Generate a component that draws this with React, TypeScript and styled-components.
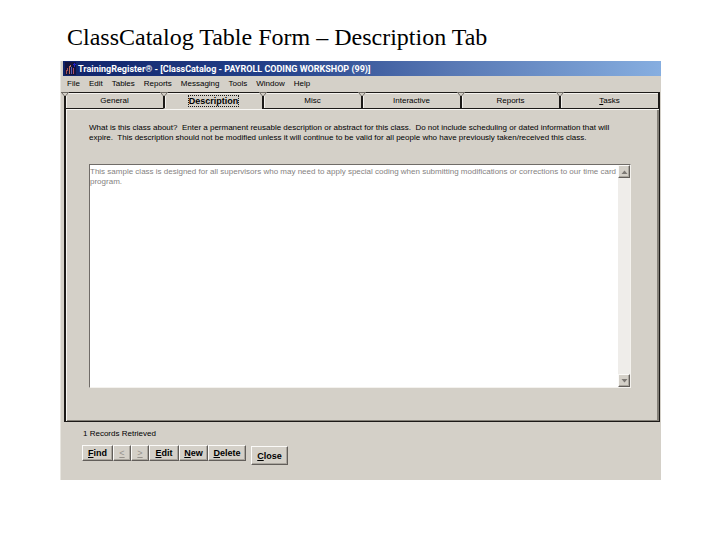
import React from "react";
import styled, { createGlobalStyle, css } from "styled-components";

const face = "#d4d0c8";
const ink = "#1c1a18";
const shade = "#848078";
const boldFont = `700 9px/10px "Liberation Sans", Arial, sans-serif`;

const GlobalStyle = createGlobalStyle`
  *, *::before, *::after { box-sizing: border-box; }
  body {
    margin: 0;
    background: #fff;
    color: #000;
    font-family: "Liberation Sans", Arial, sans-serif;
    font-size: 8px;
    line-height: 10px;
  }
  button, textarea { font: inherit; color: inherit; margin: 0; }
`;

const Page = styled.main`
  padding: 22px 59px 60px 60px;
`;

const Heading = styled.h1`
  margin: 0 0 9px 7px;
  font: 400 24px/30px "Liberation Serif", "Times New Roman", serif;
  color: #000;
`;

const AppWindow = styled.section`
  background: ${face};
  border-left: 1px solid #e8e6e0;
  padding-left: 2px;
  padding-bottom: 15px;
`;

const TitleBar = styled.header`
  display: flex;
  align-items: center;
  gap: 2px;
  height: 15px;
  padding-left: 2px;
  background: linear-gradient(90deg, #10246a 0%, #24418a 35%, #5878b4 65%, #86aee0 100%);
  color: #fff;
  font: 700 9px/14px Roboto, Tahoma, sans-serif;
  white-space: nowrap;
`;

const MenuBar = styled.nav`
  display: flex;
  gap: 9px;
  height: 16px;
  padding: 3px 0 0 4px;
`;

const MenuItem = styled.button`
  height: 10px;
  padding: 0;
  border: 0;
  background: none;
`;

const TabList = styled.div`
  display: flex;
  margin: 0 1px;
`;

const Tab = styled.button<{ $active?: boolean }>`
  position: relative;
  flex: 1;
  height: 17px;
  padding: 0;
  border: 0 solid ${ink};
  border-width: 1px 0 1px 2px;
  border-bottom-color: ${(p) => (p.$active ? face : ink)};
  background: ${face};
  box-shadow: inset 1px 1px 0 #f4f2ee;
  ${(p) => p.$active && `font: ${boldFont};`}

  &:last-child { border-right-width: 2px; }
`;

const Notch = styled.svg`
  position: absolute;
  top: -1px;
  left: -5px;
  width: 8px;
  height: 5px;
`;

const Focus = styled.span`
  display: inline-block;
  outline: 1px dotted ${ink};
`;

const Panel = styled.div`
  margin: 0 1px;
  padding: 14px 28px 33px 23px;
  border: 0 solid ${ink};
  border-width: 0 1px 1px 2px;
  box-shadow: inset 1px 1px 0 #f8f7f4, inset -2px -1px 0 ${shade};
`;

const Hint = styled.label`
  display: block;
  margin-bottom: 21px;
  white-space: pre-wrap;
`;

const Field = styled.div`
  display: flex;
  height: 224px;
  border: 1px solid;
  border-color: #706c68 #f4f2ee #f4f2ee #706c68;
  background: #fff;
`;

const TextBox = styled.textarea`
  flex: 1;
  min-width: 0;
  padding: 2px 0 0;
  border: 0;
  outline: 0;
  resize: none;
  overflow: hidden;
  background: #fff;
  color: #85827f;
`;

const ScrollTrack = styled.div`
  display: flex;
  flex-direction: column;
  justify-content: space-between;
  width: 12px;
  background: #efedea;
`;

const raised = css`
  border: 1px solid;
  border-color: #fbfaf8 #625e5a #625e5a #fbfaf8;
  background: ${face};
  box-shadow: inset -1px -1px 0 #aaa69e;
`;

const ScrollButton = styled.button`
  ${raised}
  display: grid;
  place-items: center;
  height: 13px;
  padding: 0;
`;

const Status = styled.p`
  margin: 7px 0 0 20px;
`;

const Actions = styled.div`
  display: flex;
  margin: 6px 0 0 19px;
`;

const Group = styled.div`
  display: flex;
  align-self: flex-start;
`;

const Action = styled.button<{ $w: number; $large?: boolean }>`
  ${raised}
  width: ${(p) => p.$w}px;
  height: ${(p) => (p.$large ? 19 : 16)}px;
  padding: 0;
  font: ${boldFont};

  &:disabled { color: #96928c; font-weight: 400; }
`;

const CloseSlot = styled.div`
  padding: 1px 0 0 5px;
`;

const AppIcon = () => (
  <svg width="11" height="13" viewBox="0 0 11 13" aria-hidden="true">
    <rect width="11" height="13" fill="#14143e" />
    <path d="M1.5 12V8M2.5 9V6" stroke="#a05058" fill="none" />
    <path d="M4.5 12V4M5.5 5V3" stroke="#c0705c" fill="none" />
    <path d="M6.5 12V5" stroke="#5c5cb4" fill="none" />
    <path d="M8.5 12V6" stroke="#b05068" fill="none" />
    <path d="M8 2.5H11M9.5 1V5" stroke="#2020c8" fill="none" />
  </svg>
);

const Arrow = ({ down }: { down?: boolean }) => (
  <svg width="7" height="4" viewBox="0 0 7 4" aria-hidden="true">
    <path d={down ? "M0.5 0H6.5L3.5 3.5Z" : "M0.5 4H6.5L3.5 0.5Z"} fill="#7c7874" />
  </svg>
);

const menus = ["File", "Edit", "Tables", "Reports", "Messaging", "Tools", "Window", "Help"];
const tabs = ["General", "Description", "Misc", "Interactive", "Reports", "Tasks"];
const actions = [
  { key: "F", rest: "ind", width: 31 },
  { key: "<", rest: "", width: 18, disabled: true },
  { key: ">", rest: "", width: 18, disabled: true },
  { key: "E", rest: "dit", width: 30 },
  { key: "N", rest: "ew", width: 29 },
  { key: "D", rest: "elete", width: 38 },
];

export default function App() {
  return (
    <>
      <GlobalStyle />
      <Page>
        <Heading>ClassCatalog Table Form – Description Tab</Heading>
        <AppWindow>
          <TitleBar>
            <AppIcon />
            <span>TrainingRegister® - [ClassCatalog - PAYROLL CODING WORKSHOP (99)]</span>
          </TitleBar>
          <MenuBar>
            {menus.map((m) => (
              <MenuItem key={m} type="button">{m}</MenuItem>
            ))}
          </MenuBar>
          <TabList role="tablist">
            {tabs.map((t) => {
              const active = t === "Description";
              return (
                <Tab key={t} type="button" role="tab" aria-selected={active} $active={active}>
                  <Notch viewBox="0 0 8 5" aria-hidden="true">
                    <path d="M0 0H8L5 4H3Z" fill={face} />
                    <path d="M0 0.5H8M0.5 0.5L3.5 4M7.5 0.5L4.5 4" stroke="#6c6862" fill="none" />
                  </Notch>
                  {active ? <Focus>{t}</Focus> : t === "Tasks" ? <><u>T</u>asks</> : t}
                </Tab>
              );
            })}
          </TabList>
          <Panel role="tabpanel">
            <Hint htmlFor="description">
              {"What is this class about?  Enter a permanent reusable description or abstract for this class.  Do not include scheduling or dated information that will\nexpire.  This description should not be modified unless it will continue to be valid for all people who have previously taken/received this class."}
            </Hint>
            <Field>
              <TextBox
                id="description"
                readOnly
                value="This sample class is designed for all supervisors who may need to apply special coding when submitting modifications or corrections to our time card program."
              />
              <ScrollTrack>
                <ScrollButton type="button" aria-label="Scroll up"><Arrow /></ScrollButton>
                <ScrollButton type="button" aria-label="Scroll down"><Arrow down /></ScrollButton>
              </ScrollTrack>
            </Field>
          </Panel>
          <Status>1 Records Retrieved</Status>
          <Actions>
            <Group>
              {actions.map((a) => (
                <Action key={a.key} type="button" $w={a.width} disabled={a.disabled}>
                  <u>{a.key}</u>{a.rest}
                </Action>
              ))}
            </Group>
            <CloseSlot>
              <Action type="button" $w={37} $large><u>C</u>lose</Action>
            </CloseSlot>
          </Actions>
        </AppWindow>
      </Page>
    </>
  );
}
